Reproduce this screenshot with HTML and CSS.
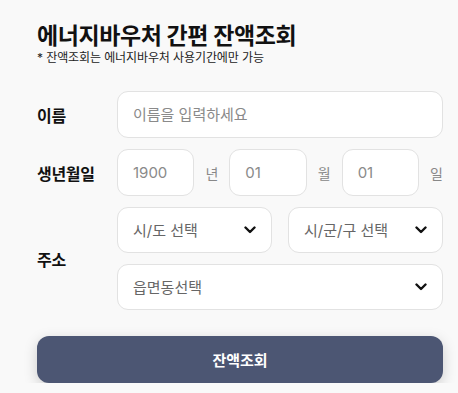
FILE: index.html
```html
<!DOCTYPE html>
<html lang="ko">
<head>
  <meta charset="UTF-8">
  <meta name="viewport" content="width=device-width, initial-scale=1.0">
  <title>에너지바우처 간편 잔액조회</title>
  <link rel="stylesheet" href="styles.css">
</head>
<body>
  <main class="page">
    <header class="head">
      <h1 class="title">에너지바우처 간편 잔액조회</h1>
      <p class="note">* 잔액조회는 에너지바우처 사용기간에만 가능</p>
    </header>

    <form class="form" onsubmit="return false">
      <div class="row">
        <label class="label" for="name">이름</label>
        <input class="field" id="name" type="text" placeholder="이름을 입력하세요">
      </div>

      <div class="row">
        <span class="label">생년월일</span>
        <div class="birth">
          <input class="field" type="text" placeholder="1900">
          <span class="unit">년</span>
          <input class="field" type="text" placeholder="01">
          <span class="unit">월</span>
          <input class="field" type="text" placeholder="01">
          <span class="unit">일</span>
        </div>
      </div>

      <div class="row">
        <span class="label">주소</span>
        <div class="address">
          <div class="select-wrap">
            <select class="field select">
              <option>시/도 선택</option>
            </select>
            <svg class="chevron" viewBox="0 0 12 8" width="12" height="8"><path d="M1.5 1.5 6 6l4.5-4.5" fill="none" stroke="#111" stroke-width="2.4" stroke-linecap="round" stroke-linejoin="round"/></svg>
          </div>
          <div class="select-wrap">
            <select class="field select">
              <option>시/군/구 선택</option>
            </select>
            <svg class="chevron" viewBox="0 0 12 8" width="12" height="8"><path d="M1.5 1.5 6 6l4.5-4.5" fill="none" stroke="#111" stroke-width="2.4" stroke-linecap="round" stroke-linejoin="round"/></svg>
          </div>
          <div class="select-wrap wide">
            <select class="field select">
              <option>읍면동선택</option>
            </select>
            <svg class="chevron" viewBox="0 0 12 8" width="12" height="8"><path d="M1.5 1.5 6 6l4.5-4.5" fill="none" stroke="#111" stroke-width="2.4" stroke-linecap="round" stroke-linejoin="round"/></svg>
          </div>
        </div>
      </div>

      <button class="submit" type="submit">잔액조회</button>
    </form>
  </main>
</body>
</html>
```

FILE: styles.css
```css
body {
  margin: 0;
  background-color: #F9F9F9;
  font-family: Inter, "Noto Sans CJK KR", sans-serif;
  color: #111111;
}
.page {
  padding: 21px 15px 0 37px;
}
.head {
  margin-bottom: 26px;
}
.title {
  margin: 0;
  font-size: 23px;
  line-height: 30px;
  font-weight: 700;
  letter-spacing: -0.4px;
}
.note {
  margin: 0;
  font-size: 12px;
  line-height: 14px;
  letter-spacing: -0.1px;
  color: #222222;
}
.form {
  display: flex;
  flex-direction: column;
  gap: 11px;
}
.row {
  display: flex;
  align-items: center;
}
.label {
  flex: 0 0 80px;
  font-size: 16px;
  font-weight: 700;
  letter-spacing: -0.3px;
}
.field {
  box-sizing: border-box;
  width: 100%;
  min-width: 0;
  height: 47px;
  padding: 0 15px;
  background-color: #FFFFFF;
  border: 1px solid #E2E2E2;
  border-radius: 11px;
  font-family: inherit;
  font-size: 15px;
  color: #888888;
  outline: none;
}
.field::placeholder {
  color: #8A8A8A;
}
#name {
  flex: 1;
}
.birth {
  flex: 1;
  display: grid;
  grid-template-columns: 1fr auto 1fr auto 1fr auto;
  align-items: center;
  column-gap: 11px;
}
.unit {
  font-size: 14px;
  color: #888888;
}
.address {
  flex: 1;
  display: grid;
  grid-template-columns: 1fr 1fr;
  column-gap: 16px;
  row-gap: 11px;
}
.select-wrap {
  position: relative;
}
.select-wrap.wide {
  grid-column: 1 / -1;
}
.select {
  height: 46px;
  appearance: none;
  -webkit-appearance: none;
  color: #666666;
}
.chevron {
  position: absolute;
  right: 16px;
  top: 19px;
  pointer-events: none;
}
.submit {
  margin-top: 15px;
  height: 47px;
  border: none;
  border-radius: 12px;
  background-color: #4C5673;
  box-shadow: 0 4px 14px rgba(0, 0, 0, 0.18);
  color: #FFFFFF;
  font-family: inherit;
  font-size: 15px;
  font-weight: 700;
  cursor: pointer;
}
```
